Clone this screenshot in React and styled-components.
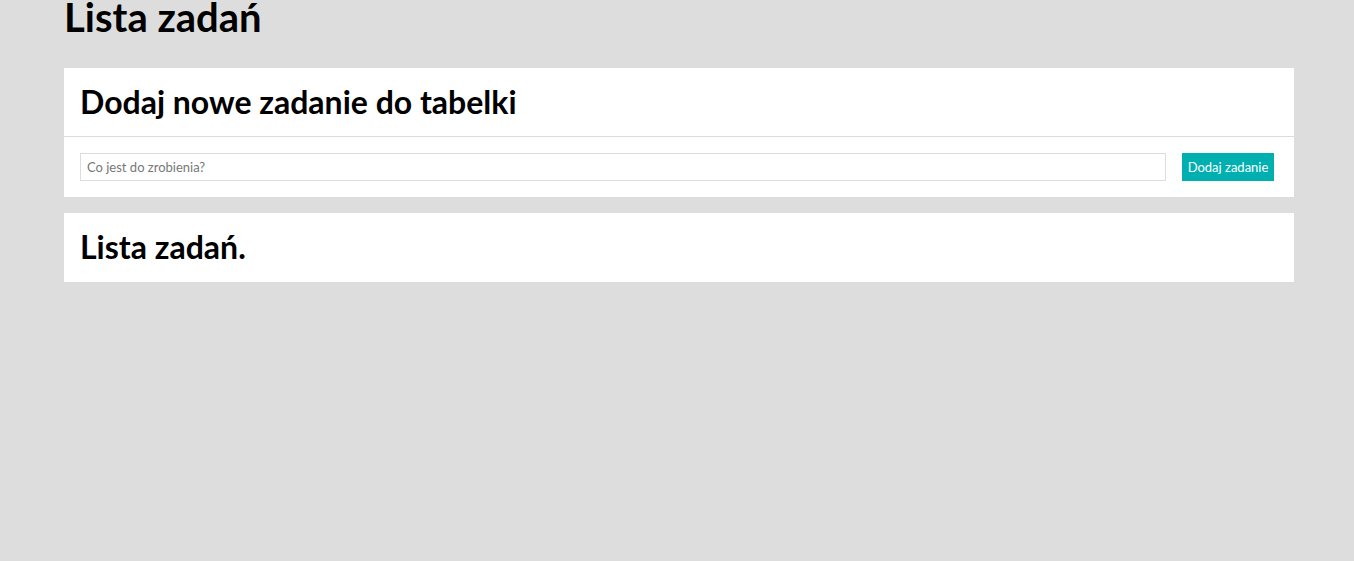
import React from "react";
import styled, { createGlobalStyle } from "styled-components";

const Global = createGlobalStyle`
  html, body { margin: 0; padding: 0; background: #dddddd; }
  body { font-family: Lato, "Open Sans", sans-serif; color: #000; }
`;

const Page = styled.div`
  width: 1230px;
  margin: 0 60px 0 64px;
`;

const Title = styled.h1`
  margin: 0 0 34px 0;
  font-size: 40px;
  line-height: 34px;
  font-weight: 700;
`;

const Card = styled.section`
  background: #fff;
  margin-bottom: 16px;
`;

const CardHeader = styled.header`
  height: 69px;
  box-sizing: border-box;
  padding: 0 16px 1px;
  display: flex;
  align-items: center;
  border-bottom: 1px solid ${(p) => (p.$divider ? "#dddddd" : "transparent")};
`;

const CardTitle = styled.h2`
  margin: 0;
  font-size: 32px;
  font-weight: 700;
  line-height: 36px;
`;

const CardBody = styled.form`
  display: flex;
  gap: 16px;
  padding: 16px 20px 16px 16px;
  margin: 0;
`;

const Input = styled.input`
  flex: 1;
  height: 28px;
  box-sizing: border-box;
  border: 1px solid #dddddd;
  padding: 0 6px;
  font-family: Lato, sans-serif;
  font-size: 13px;
  outline: none;
  &::placeholder { color: #777; }
`;

const Button = styled.button`
  height: 28px;
  width: 92px;
  border: none;
  background: #00b0b0;
  color: #fff;
  font-family: Lato, sans-serif;
  font-size: 13px;
  padding: 0;
  cursor: pointer;
`;

export default function App() {
  return (
    <>
      <Global />
      <Page>
        <Title>Lista zadań</Title>
        <Card>
          <CardHeader $divider>
            <CardTitle>Dodaj nowe zadanie do tabelki</CardTitle>
          </CardHeader>
          <CardBody onSubmit={(e) => e.preventDefault()}>
            <Input placeholder="Co jest do zrobienia?" />
            <Button type="submit">Dodaj zadanie</Button>
          </CardBody>
        </Card>
        <Card>
          <CardHeader>
            <CardTitle>Lista zadań.</CardTitle>
          </CardHeader>
        </Card>
      </Page>
    </>
  );
}
